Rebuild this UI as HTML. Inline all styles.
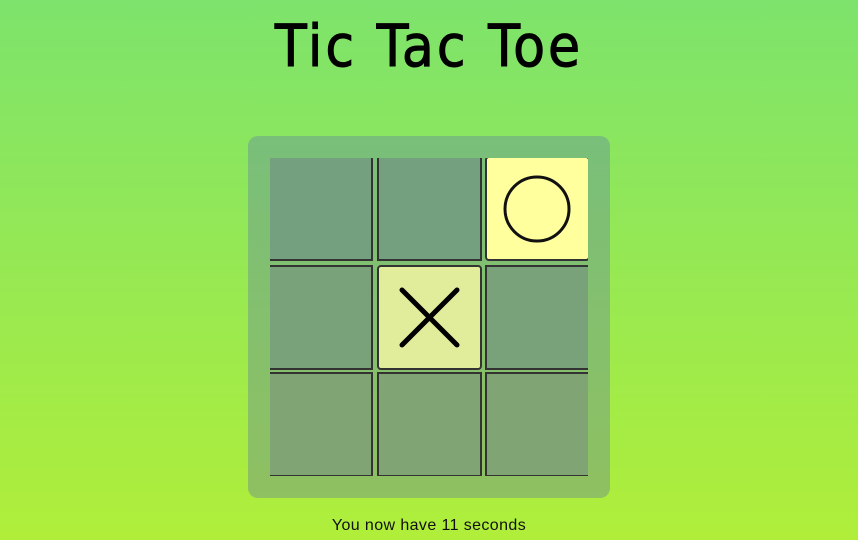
<!DOCTYPE html>
<html><head><style>
html,body{margin:0;width:858px;height:540px;overflow:hidden}
body{background:linear-gradient(#7de36c,#b0ee3a);font-family:"Liberation Sans",sans-serif;position:relative}
h1{position:absolute;top:12px;left:0;width:858px;margin:0;text-align:center;font:58px "DejaVu Sans Condensed","Liberation Sans",sans-serif;letter-spacing:3px;color:#000;-webkit-text-stroke:1px #000}
.board{position:absolute;left:248px;top:136px;width:362px;height:362px;border-radius:10px;background:linear-gradient(#79bf7a,#8fc061)}
.grid{position:absolute;left:22px;top:22px;width:318px;height:318px;overflow:hidden}
.c{position:absolute;width:101px;height:101px;border:2px solid #333;box-sizing:content-box}
.r1{background:#74a07f}.r2{background:#7aa27a}.r3{background:#81a475}
.o{background:#ffff9e;border-radius:4px}
.x{background:#e2ed9c;border-radius:4px}
.t{position:absolute;top:517px;width:858px;text-align:center;font-size:16px;color:#111;letter-spacing:.4px}
</style></head><body>
<h1>Tic Tac Toe</h1>
<div class="board"><div class="grid">
<div class="c r1" style="left:-2px;top:-2px"></div>
<div class="c r1" style="left:107px;top:-2px"></div>
<div class="c o" style="left:215px;top:-2px"><svg width="101" height="101"><circle cx="50" cy="51" r="32" fill="none" stroke="#111" stroke-width="3"/></svg></div>
<div class="c r2" style="left:-2px;top:107px"></div>
<div class="c x" style="left:107px;top:107px"><svg width="101" height="101"><path d="M23 23L78 78M78 23L23 78" stroke="#000" stroke-width="5" stroke-linecap="round"/></svg></div>
<div class="c r2" style="left:215px;top:107px"></div>
<div class="c r3" style="left:-2px;top:214px"></div>
<div class="c r3" style="left:107px;top:214px"></div>
<div class="c r3" style="left:215px;top:214px"></div>
</div></div>
<div class="t">You now have 11 seconds</div>
</body></html>
